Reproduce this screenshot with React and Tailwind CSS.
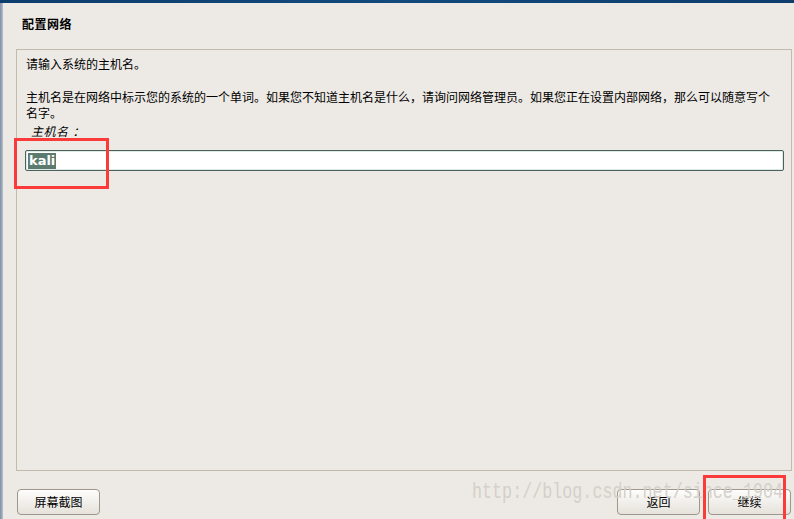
import React from "react";

const cjk = { fontFamily: '"Noto Sans CJK SC", "Noto Sans", sans-serif' };

function GtkButton({ label, className = "" }) {
  return (
    <button
      className={`h-[26px] w-[83px] rounded-[4px] border border-[#9d968b] bg-gradient-to-b from-[#fdfdfc] to-[#e6e2db] text-[12px] text-black shadow-[inset_0_1px_0_#ffffff] ${className}`}
      style={cjk}
    >
      {label}
    </button>
  );
}

export default function App() {
  return (
    <div
      className="relative w-[794px] h-[519px] overflow-hidden bg-[#edeae5] flex flex-col"
      style={cjk}
    >
      <div className="h-[3px] bg-gradient-to-r from-[#0d3d6c] via-[#124a7e] to-[#0d3d6c]" />
      <div className="flex flex-1">
        {/* left window edge */}
        <div className="w-[3px] bg-gradient-to-r from-[#7f8da3] to-[#b8c1cd]" />
        <div className="flex-1 flex flex-col">
          <h1 className="mt-[13px] ml-[19px] h-[16px] leading-[16px] text-[12px] font-bold tracking-[0.5px] text-black">
            配置网络
          </h1>

          <div className="mt-[17px] ml-[13px] w-[776px] h-[422px] border border-[#c4bbaf] pt-[6px] pl-[9px] text-[12px] leading-[16px] text-black">
            <p>请输入系统的主机名。</p>
            <p className="mt-[17px] whitespace-nowrap">
              主机名是在网络中标示您的系统的一个单词。如果您不知道主机名是什么，请询问网络管理员。如果您正在设置内部网络，那么可以随意写个
              <br />
              名字。
            </p>
            <p className="mt-[2px] ml-[5px] italic tracking-[0.5px]">
              主机名<span className="ml-[4px]">：</span>
            </p>
            <div className="mt-[11px] -ml-[1px] w-[759px] h-[21px] rounded-[2px] border border-[#4a625b] bg-white shadow-[inset_0_0_0_1px_#dfe9e6] flex items-center pl-[2px]">
              <span className="bg-[#5b7b6f] px-[1px] text-[13px] leading-[16px] font-bold text-white" style={{ fontFamily: '"DejaVu Sans", sans-serif' }}>
                kali
              </span>
            </div>
          </div>

          <div className="mt-[18px] ml-[14px] mr-[3px] flex">
            <GtkButton label="屏幕截图" />
            <div className="flex-1" />
            <GtkButton label="返回" />
            <GtkButton label="继续" className="ml-[8px]" />
          </div>
        </div>
      </div>

      {/* watermark */}
      <div
        className="pointer-events-none absolute left-[472px] top-[480px] origin-left scale-x-[0.76] text-[22px] leading-[26px] text-[#d4d0ca] whitespace-nowrap"
        style={{ fontFamily: '"Liberation Mono", monospace' }}
      >
        http://blog.csdn.net/since_1904
      </div>

      {/* red annotation boxes */}
      <div className="pointer-events-none absolute left-[14px] top-[138px] w-[95px] h-[51px] border-[3px] border-[#fb3a3a]" />
      <div className="pointer-events-none absolute left-[703px] top-[475px] w-[83px] h-[50px] border-[3px] border-[#fb3a3a]" />
    </div>
  );
}
